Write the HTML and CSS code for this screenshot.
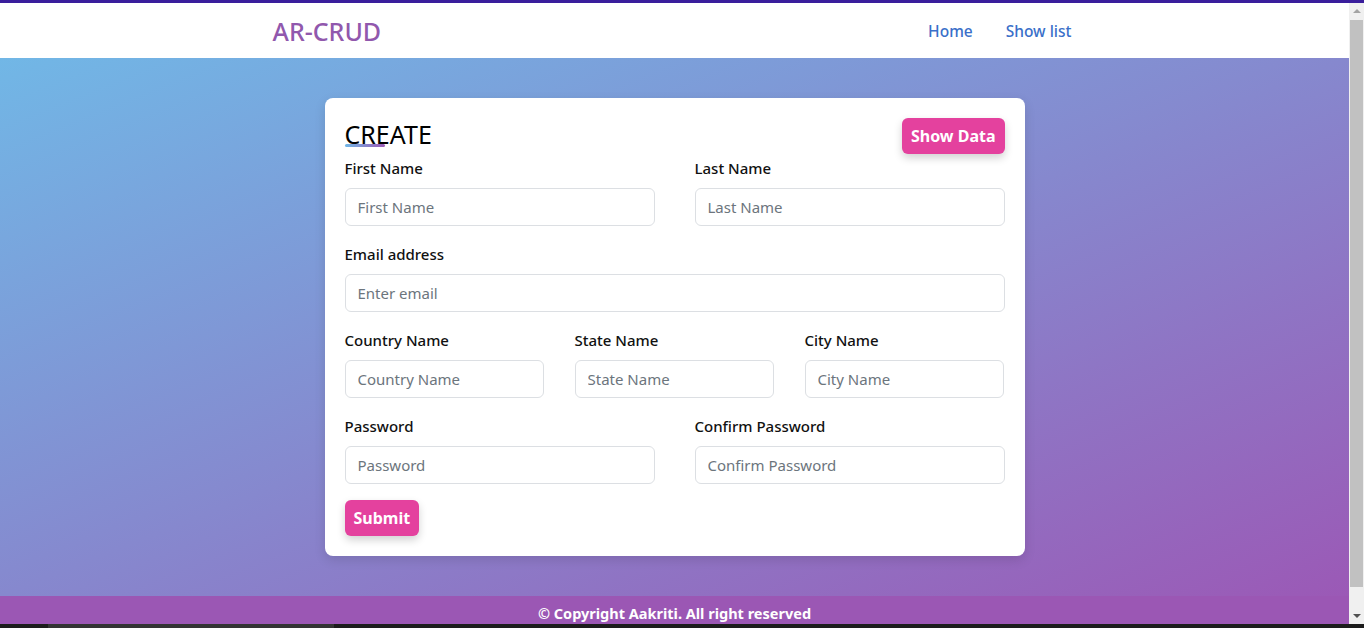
FILE: index.html
```html
<!DOCTYPE html>
<html lang="en">
<head>
<meta charset="utf-8">
<title>AR-CRUD</title>
<link rel="stylesheet" href="styles.css">
</head>
<body>
<div class="topline"></div>
<div class="window">
  <div class="page">
    <nav class="navbar">
      <div class="nav-inner">
        <a class="brand" href="#">AR-CRUD</a>
        <div class="nav-links">
          <a href="#">Home</a>
          <a href="#">Show list</a>
        </div>
      </div>
    </nav>
    <main class="main">
      <form class="card">
        <div class="card-head">
          <h2 class="title">CREATE</h2>
          <button type="button" class="btn">Show Data</button>
        </div>
        <div class="row two">
          <div class="field">
            <label>First Name</label>
            <input type="text" placeholder="First Name">
          </div>
          <div class="field">
            <label>Last Name</label>
            <input type="text" placeholder="Last Name">
          </div>
        </div>
        <div class="row one">
          <div class="field">
            <label>Email address</label>
            <input type="email" placeholder="Enter email">
          </div>
        </div>
        <div class="row three">
          <div class="field">
            <label>Country Name</label>
            <input type="text" placeholder="Country Name">
          </div>
          <div class="field">
            <label>State Name</label>
            <input type="text" placeholder="State Name">
          </div>
          <div class="field">
            <label>City Name</label>
            <input type="text" placeholder="City Name">
          </div>
        </div>
        <div class="row two">
          <div class="field">
            <label>Password</label>
            <input type="password" placeholder="Password">
          </div>
          <div class="field">
            <label>Confirm Password</label>
            <input type="password" placeholder="Confirm Password">
          </div>
        </div>
        <div class="actions">
          <button type="button" class="btn">Submit</button>
        </div>
      </form>
    </main>
    <footer class="footer">© Copyright Aakriti. All right reserved</footer>
  </div>
  <div class="scrollbar">
    <div class="sb-arrow up"></div>
    <div class="sb-track"><div class="sb-thumb"></div></div>
    <div class="sb-arrow down"></div>
  </div>
</div>
<div class="taskbar"><div class="tb-item"></div></div>
</body>
</html>
```
FILE: styles.css
```css
* { box-sizing: border-box; }
html, body { margin: 0; padding: 0; }
body {
  height: 628px;
  overflow: hidden;
  display: flex;
  flex-direction: column;
  font-family: "Noto Sans", "Open Sans", sans-serif;
  color: #212529;
}
.topline { height: 3px; background: #3a1e9c; flex: none; }
.window { flex: 1; display: flex; min-height: 0; }
.page { flex: 1; display: flex; flex-direction: column; min-width: 0; }

.navbar { height: 55px; background: #fff; flex: none; }
.nav-inner {
  width: 800px;
  margin: 0 auto;
  height: 100%;
  display: flex;
  align-items: center;
  justify-content: space-between;
  padding: 0 3px 0 0;
}
.brand {
  color: #9158ad;
  font-size: 25px;
  font-weight: 500;
  text-decoration: none;
  margin-left: -2px;
}
.nav-links { display: flex; gap: 33px; }
.nav-links a {
  color: #3a6fc9;
  font-size: 15.5px;
  font-weight: 500;
  text-decoration: none;
}

.main {
  flex: 1;
  padding: 40px 0;
  background: linear-gradient(to right bottom, #71b7e6, #9b59b6);
  display: flex;
  justify-content: center;
  align-items: flex-start;
}
.card {
  width: 700px;
  background: #fff;
  border-radius: 8px;
  padding: 20px;
  box-shadow: 0 4px 12px rgba(0,0,0,0.12);
}
.card-head {
  height: 36px;
  display: flex;
  justify-content: space-between;
  align-items: flex-start;
  margin-bottom: 2px;
}
.title {
  position: relative;
  margin: 0;
  font-size: 25px;
  font-weight: 400;
  color: #000;
  line-height: 32px;
}
.title::after {
  content: "";
  position: absolute;
  left: 0;
  bottom: 3px;
  width: 40px;
  height: 3px;
  border-radius: 2px;
  background: linear-gradient(to right, #71b7e6, #9b59b6);
}
.btn {
  height: 36px;
  padding: 0 9px;
  border: none;
  border-radius: 6px;
  background: #e4419e;
  color: #fff;
  font-family: inherit;
  font-size: 16px;
  font-weight: 700;
  box-shadow: 0 4px 8px rgba(0,0,0,0.18);
  cursor: pointer;
}

.row { display: grid; margin-bottom: 16px; }
.row.two { grid-template-columns: 1fr 1fr; column-gap: 40px; }
.row.one { grid-template-columns: 1fr; }
.row.three { grid-template-columns: 199px 199px 199px; column-gap: 31px; }
.field { display: flex; flex-direction: column; }
.field label {
  font-size: 15px;
  font-weight: 500;
  line-height: 24px;
  color: #111;
  margin-bottom: 8px;
}
.field input {
  height: 38px;
  border: 1px solid #dcdfe3;
  border-radius: 6px;
  padding: 0 12px;
  font-family: inherit;
  font-size: 15px;
  color: #212529;
  background: #fff;
}
.field input::placeholder { color: #6c757d; }
.actions { display: flex; }

.footer {
  height: 28px;
  flex: none;
  background: #9b57b4;
  color: #fff;
  font-weight: 700;
  font-size: 14.5px;
  text-align: center;
  line-height: 34px;
  overflow: hidden;
}

.scrollbar {
  width: 15px;
  flex: none;
  background: #f0f0f0;
  display: flex;
  flex-direction: column;
}
.sb-arrow { height: 17px; flex: none; position: relative; }
.sb-arrow::after {
  content: "";
  position: absolute;
  left: 4px;
  width: 0; height: 0;
  border-left: 4px solid transparent;
  border-right: 4px solid transparent;
}
.sb-arrow.up::after { top: 6px; border-bottom: 4px solid #a3a3a3; }
.sb-arrow.down::after { top: 7px; border-top: 4px solid #505050; }
.sb-track { flex: 1; padding: 0 1px; display: flex; }
.sb-thumb { flex: 1; background: #c1c1c1; margin-bottom: 20px; }

.taskbar { height: 4px; flex: none; background: #1c1c1c; display: flex; }
.tb-item { width: 286px; margin-left: 48px; background: #333; }
```
